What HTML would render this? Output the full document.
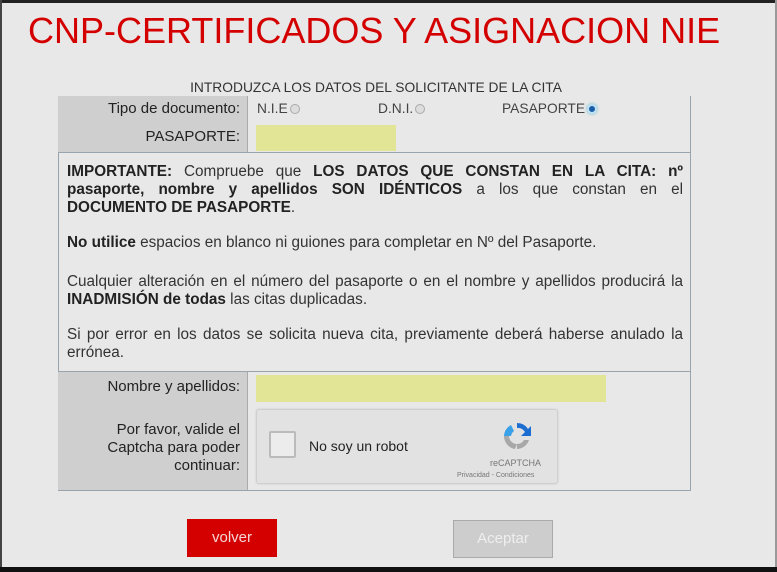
<!DOCTYPE html>
<html><head><meta charset="utf-8"><style>
*{margin:0;padding:0;box-sizing:border-box}
body{width:777px;height:572px;background:#e8e8e8;font-family:"Liberation Sans",Arial,sans-serif;position:relative;overflow:hidden;color:#222}
.a{position:absolute}
.lab{position:absolute;text-align:right;font-size:15px;color:#222}
p.t{position:absolute;left:67px;width:616px;font-size:15.3px;line-height:18px;color:#333}
p.t span{display:block;text-align:justify;text-align-last:justify;white-space:nowrap}
p.t span.l{text-align-last:left}
p.t b{color:#222}
.rad{display:inline-block;width:10px;height:10px;border-radius:50%;border:1px solid #aaa;background:#ddd;vertical-align:-1px;margin-left:2px}
</style></head><body>
<div class="a" style="left:0;top:0;width:777px;height:3px;background:#222"></div>
<div class="a" style="left:0;top:0;width:2px;height:572px;background:#444"></div>
<div class="a" style="left:775px;top:0;width:2px;height:572px;background:#999"></div>
<div class="a" style="left:0;top:567px;width:777px;height:5px;background:#111"></div>
<div class="a" style="left:28px;top:10px;font-size:36px;color:#d40000;white-space:nowrap">CNP-CERTIFICADOS Y ASIGNACION NIE</div>
<div class="a" style="left:0;width:752px;top:80px;text-align:center;font-size:13.8px;color:#333">INTRODUZCA LOS DATOS DEL SOLICITANTE DE LA CITA</div>
<div class="a" style="left:58px;top:96px;width:633px;height:395px;border:1px solid #9aa4ad;border-top:none"></div>
<div class="a" style="left:58px;top:96px;width:190px;height:56px;background:#cfcfcf;border-right:1px solid #aaa"></div>
<div class="a" style="left:58px;top:152px;width:633px;height:1px;background:#9aa4ad"></div>
<div class="a" style="left:58px;top:371px;width:633px;height:1px;background:#9aa4ad"></div>
<div class="a" style="left:58px;top:372px;width:190px;height:118px;background:#cfcfcf;border-right:1px solid #aaa"></div>
<div class="lab" style="left:58px;width:182px;top:100px">Tipo de documento:</div>
<div class="lab" style="left:58px;width:182px;top:128px">PASAPORTE:</div>
<div class="a" style="left:257px;top:101px;font-size:13.8px;color:#444">N.I.E<span class="rad"></span></div>
<div class="a" style="left:378px;top:101px;font-size:13.8px;color:#444">D.N.I.<span class="rad"></span></div>
<div class="a" style="left:502px;top:101px;font-size:13.8px;color:#444">PASAPORTE<span class="rad" style="background:#1a5fa8;border:2px solid #bfe0f5;box-shadow:0 0 3px #6bc"></span></div>
<div class="a" style="left:256px;top:125px;width:140px;height:26px;background:#e3e596"></div>
<p class="t" style="top:163px"><span><b>IMPORTANTE:</b> Compruebe que <b>LOS DATOS QUE CONSTAN EN LA CITA: nº</b></span><span><b>pasaporte, nombre y apellidos SON IDÉNTICOS</b> a los que constan en el</span><span class="l"><b>DOCUMENTO DE PASAPORTE</b>.</span></p>
<p class="t" style="top:234px"><span class="l"><b>No utilice</b> espacios en blanco ni guiones para completar en Nº del Pasaporte.</span></p>
<p class="t" style="top:273px"><span>Cualquier alteración en el número del pasaporte o en el nombre y apellidos producirá la</span><span class="l"><b>INADMISIÓN de todas</b> las citas duplicadas.</span></p>
<p class="t" style="top:326px"><span>Si por error en los datos se solicita nueva cita, previamente deberá haberse anulado la</span><span class="l">errónea.</span></p>
<div class="lab" style="left:58px;width:182px;top:378px">Nombre y apellidos:</div>
<div class="lab" style="left:58px;width:182px;top:421px;line-height:18px">Por favor, valide el<br>Captcha para poder<br>continuar:</div>
<div class="a" style="left:256px;top:375px;width:350px;height:27px;background:#e3e596"></div>
<div class="a" style="left:256px;top:409px;width:302px;height:75px;background:#e2e2e2;border:1px solid #cfcfcf;border-radius:3px;box-shadow:0 0 2px #ccc"></div>
<div class="a" style="left:269px;top:431px;width:27px;height:27px;border:2px solid #bbb;border-radius:2px;background:#ececec"></div>
<div class="a" style="left:309px;top:438px;font-size:14px;color:#222">No soy un robot</div>
<svg class="a" style="left:500px;top:419px" width="34" height="34" viewBox="0 0 34 34"><path d="M17 4a13 13 0 0 1 11 6l3-3v10H21l4-4a8 8 0 0 0-8-4z" fill="#1c6fd0"/><path d="M4 17a13 13 0 0 1 7-11l3 6a8 8 0 0 0-3 5z" fill="#3aa0e8"/><path d="M4 17h5a8 8 0 0 0 8 8l-2 5A13 13 0 0 1 4 17zM17 25a8 8 0 0 0 7-4h5a13 13 0 0 1-12 9z" fill="#a8a8a8"/></svg>
<div class="a" style="left:490px;top:458px;font-size:9px;color:#777">reCAPTCHA</div>
<div class="a" style="left:457px;top:472px;font-size:7px;color:#777">Privacidad - Condiciones</div>
<div class="a" style="left:187px;top:519px;width:90px;height:38px;background:#d40000;color:#f3d6d6;font-size:15px;text-align:center;line-height:38px">volver</div>
<div class="a" style="left:453px;top:520px;width:100px;height:38px;background:#cdcdcd;border:1px solid #aaa;color:#eee;font-size:15px;text-align:center;line-height:36px">Aceptar</div>
</body></html>
